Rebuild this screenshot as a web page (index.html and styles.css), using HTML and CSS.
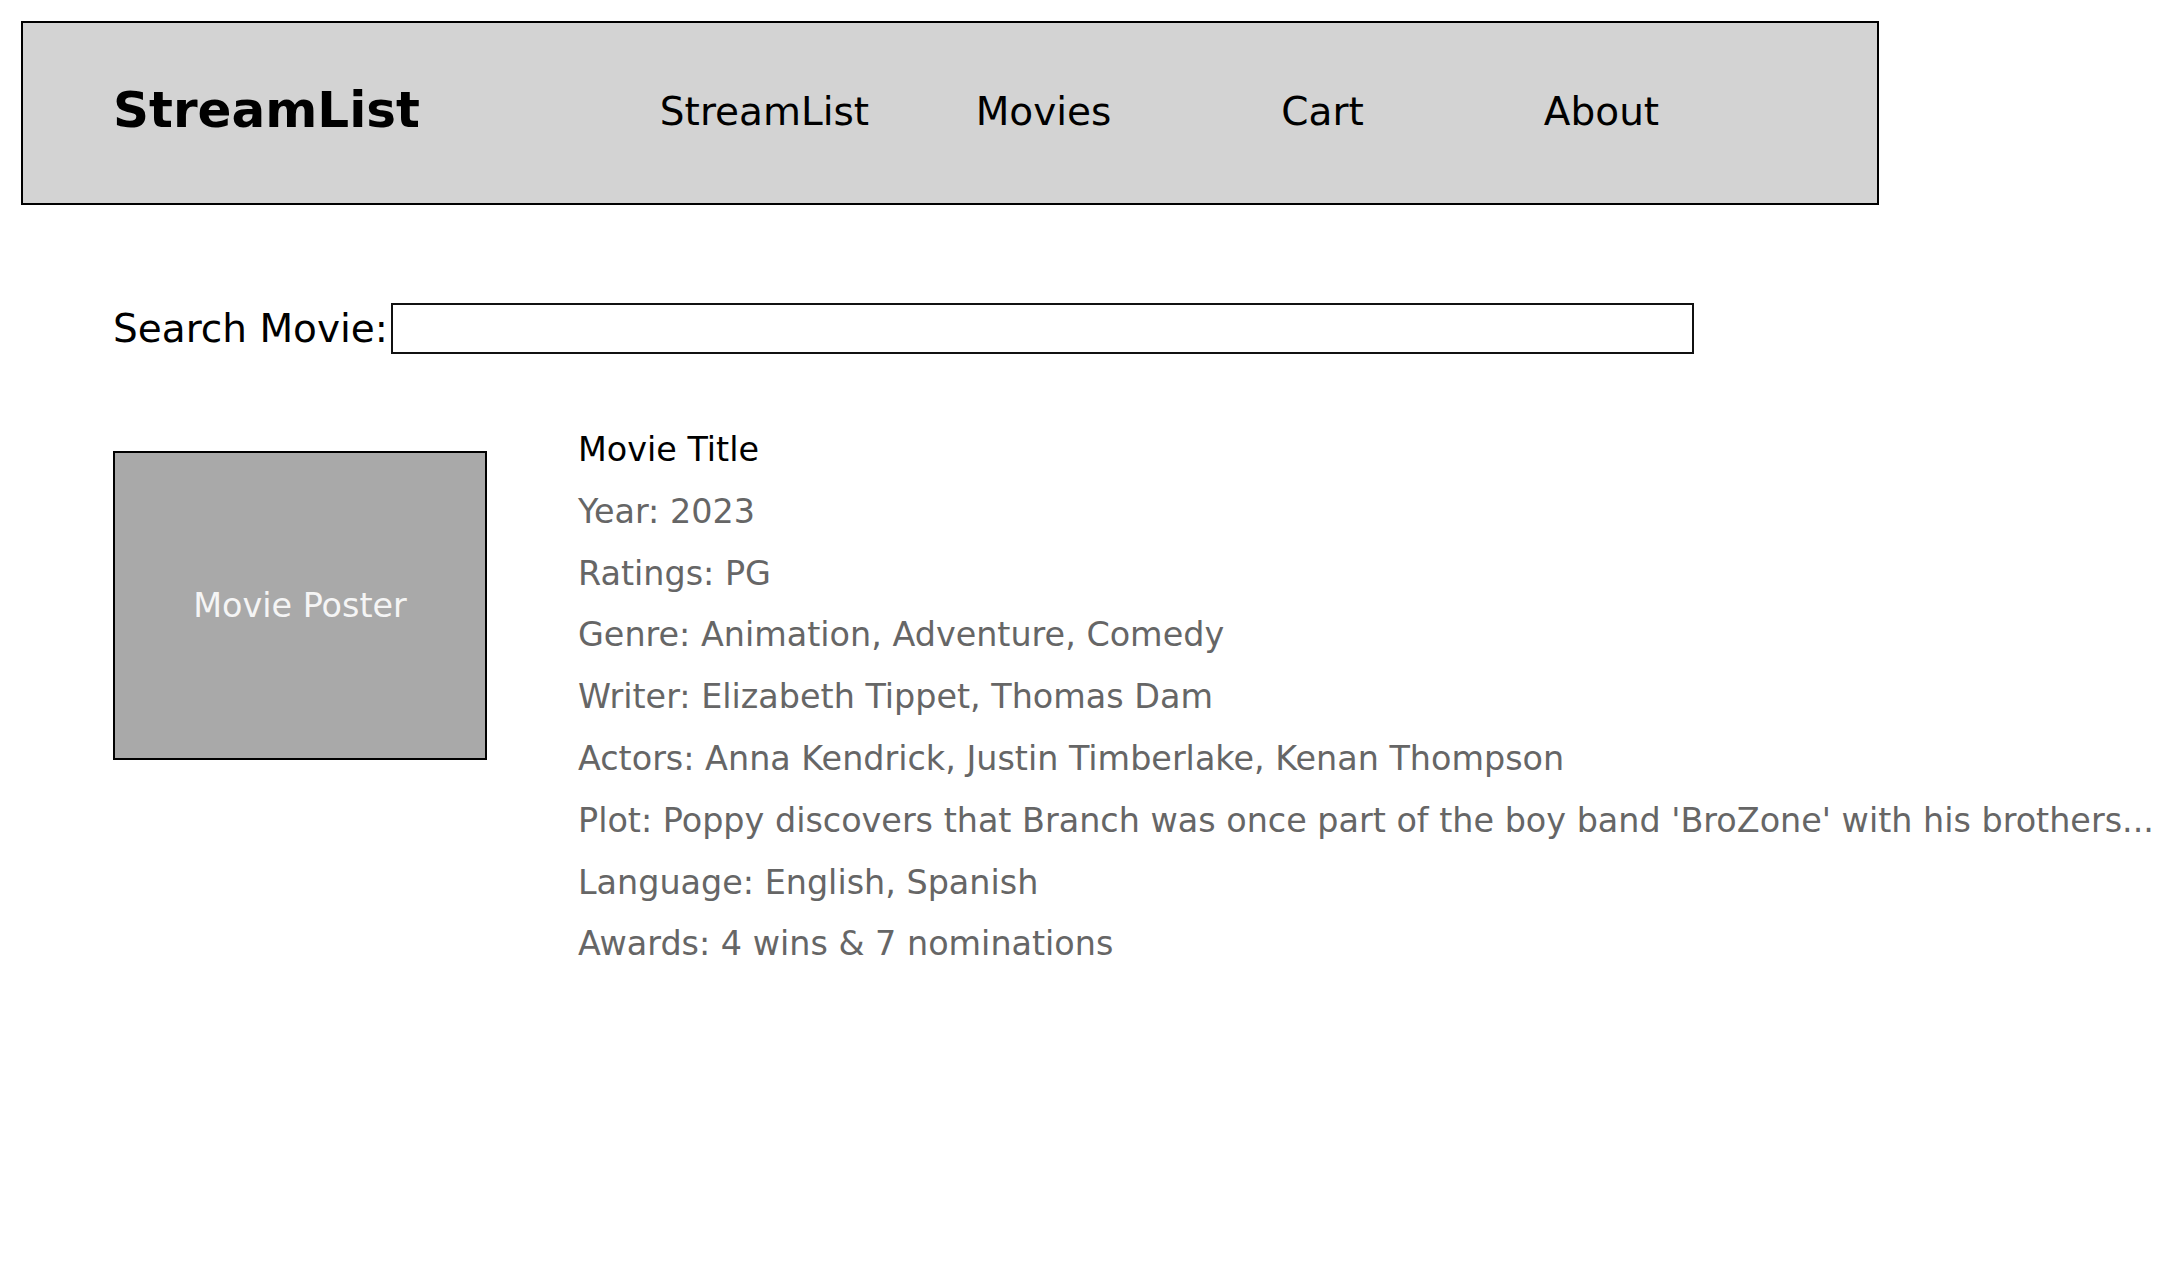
FILE: index.html
```html
<!DOCTYPE html>
<html lang="en">
<head>
<meta charset="utf-8">
<title>StreamList</title>
<link rel="stylesheet" href="styles.css">
</head>
<body>
<div class="page">
  <header class="topbar">
    <div class="brand">StreamList</div>
    <nav class="nav">
      <a class="nav-item" href="#">StreamList</a>
      <a class="nav-item" href="#">Movies</a>
      <a class="nav-item" href="#">Cart</a>
      <a class="nav-item" href="#">About</a>
    </nav>
  </header>
  <main class="content">
    <div class="search">
      <label class="search-label" for="q">Search Movie:</label>
      <input class="search-input" id="q" type="text">
    </div>
    <section class="movie">
      <div class="poster">Movie Poster</div>
      <div class="details">
        <div class="title">Movie Title</div>
        <div class="info">Year: 2023</div>
        <div class="info">Ratings: PG</div>
        <div class="info">Genre: Animation, Adventure, Comedy</div>
        <div class="info">Writer: Elizabeth Tippet, Thomas Dam</div>
        <div class="info">Actors: Anna Kendrick, Justin Timberlake, Kenan Thompson</div>
        <div class="info">Plot: Poppy discovers that Branch was once part of the boy band 'BroZone' with his brothers...</div>
        <div class="info">Language: English, Spanish</div>
        <div class="info">Awards: 4 wins &amp; 7 nominations</div>
      </div>
    </section>
  </main>
</div>
</body>
</html>
```

FILE: styles.css
```css
html, body {
  margin: 0;
  padding: 0;
  background: #ffffff;
}

body {
  font-family: "DejaVu Sans", "Liberation Sans", sans-serif;
  color: #000000;
}

.page {
  padding: 21px;
}

.topbar {
  box-sizing: border-box;
  width: 1858px;
  height: 184px;
  background: #d3d3d3;
  border: 2px solid #000000;
  display: grid;
  grid-template-columns: 512px repeat(4, 279px);
  align-items: center;
  padding-left: 90px;
}

.brand {
  font-size: 50px;
  font-weight: bold;
  margin-bottom: 7px;
}

.nav {
  display: contents;
}

.nav-item {
  font-size: 39px;
  color: #000000;
  text-decoration: none;
  text-align: center;
  margin-bottom: 4px;
}

.content {
  padding-left: 92px;
}

.search {
  display: flex;
  align-items: center;
  gap: 3px;
  margin-top: 98px;
}

.search-label {
  font-size: 39px;
}

.search-input {
  box-sizing: border-box;
  width: 1303px;
  height: 51px;
  border: 2px solid #111111;
  margin: 0;
  padding: 0;
  background: #ffffff;
}

.movie {
  display: flex;
  align-items: flex-start;
  gap: 91px;
  margin-top: 76px;
}

.poster {
  box-sizing: border-box;
  flex: 0 0 374px;
  height: 309px;
  margin-top: 21px;
  background: #a9a9a9;
  border: 2px solid #000000;
  color: #f5f5f5;
  font-size: 33.4px;
  display: flex;
  align-items: center;
  justify-content: center;
}

.details {
  display: flex;
  flex-direction: column;
  gap: 23.5px;
  padding-top: 1px;
  font-size: 33.4px;
  line-height: 38.3px;
  white-space: nowrap;
}

.title {
  color: #000000;
}

.info {
  color: #666666;
}
```
